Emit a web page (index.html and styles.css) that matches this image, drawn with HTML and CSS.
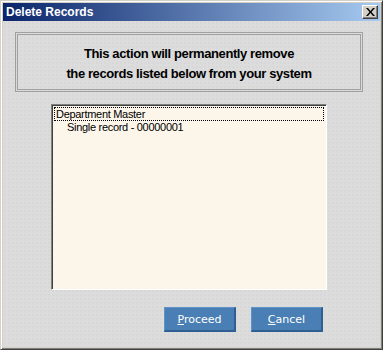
FILE: index.html
```html
<!DOCTYPE html>
<html>
	<head>
		<meta charset="utf-8" />
		<title>Delete Records</title>
		<link rel="stylesheet" href="styles.css">
	</head>
	<body>
		<div class="window">
			<div class="titlebar">
				<span class="title">Delete Records</span>
				<span class="close">
					<svg width="9" height="8" viewBox="0 0 9 8">
						<path d="M0 0h2l2.5 3 2.5-3h2l-3.5 4 3.5 4h-2l-2.5-3-2.5 3h-2l3.5-4z" fill="#000"/>
					</svg>
				</span>
			</div>
			<div class="content">
				<div class="notice">
					<p>This action will permanently remove</p>
					<p>the records listed below from your system</p>
				</div>

				<!--records list-->
				<div class="records">
					<div class="item focus">Department Master</div>
					<div class="item child">Single record - 00000001</div>
				</div>

				<div class="buttons">
					<button class="btn"><u>P</u>roceed</button>
					<button class="btn"><u>C</u>ancel</button>
				</div>
			</div>
		</div>
	</body>
</html>
```

FILE: styles.css
```css
*{
	padding: 0;
	margin: 0;
	box-sizing: border-box;
}
body{
	width: 383px;
	height: 350px;
	overflow: hidden;
	font-family: "Liberation Sans", Arial, sans-serif;
}
.window{
	width: 383px;
	height: 350px;
	background: #d4d0c8;
	border-top: 1px solid #d4d0c8;
	border-left: 1px solid #d4d0c8;
	border-right: 1px solid #404040;
	border-bottom: 1px solid #404040;
	box-shadow: inset 1px 1px 0 #fff, inset -1px -1px 0 #808080;
	padding: 2px;
	display: flex;
	flex-direction: column;
}
.titlebar{
	height: 18px;
	background: linear-gradient(to right, #0a246a, #a6caf0);
	display: flex;
	align-items: center;
	justify-content: space-between;
	padding: 0 2px 0 3px;
}
.title{
	color: #fff;
	font-weight: bold;
	font-size: 12px;
}
.close{
	width: 16px;
	height: 14px;
	background: #d4d0c8;
	border-top: 1px solid #fff;
	border-left: 1px solid #fff;
	border-right: 1px solid #404040;
	border-bottom: 1px solid #404040;
	box-shadow: inset -1px -1px 0 #808080;
	display: flex;
	align-items: center;
	justify-content: center;
	padding-bottom: 1px;
}
.content{
	flex: 1;
	background-color: #dcdcdc;
	background-image: radial-gradient(#d2d2d2 0.6px, transparent 0.8px);
	background-size: 4px 4px;
	padding: 11px 17px 0 12px;
	display: flex;
	flex-direction: column;
}
.notice{
	height: 60px;
	border: 3px double #a0a0a0;
	text-align: center;
	font-weight: bold;
	font-size: 13px;
	letter-spacing: -0.4px;
	color: #000;
	padding-top: 9px;
	line-height: 20px;
}
.records{
	margin: 12px 36px 0 36px;
	height: 186px;
	background: #fcf6ea;
	border-top: 1px solid #808080;
	border-left: 1px solid #808080;
	border-right: 1px solid #fff;
	border-bottom: 1px solid #fff;
	box-shadow: inset 1px 1px 0 #404040;
	padding: 2px;
	font-size: 11px;
	letter-spacing: -0.3px;
	color: #000;
}
.item{
	height: 14px;
	line-height: 13px;
	padding-left: 1px;
}
.focus{
	border: 1px dotted #000;
	line-height: 12px;
}
.child{
	padding-left: 13px;
}
.buttons{
	display: flex;
	gap: 15px;
	margin: 17px 0 0 149px;
}
.btn{
	width: 72px;
	height: 25px;
	background: #4a7fb5;
	border-top: 1px solid #5e93c8;
	border-left: 1px solid #5e93c8;
	border-right: 2px solid #2f5f92;
	border-bottom: 2px solid #2f5f92;
	color: #fff;
	font-family: "DejaVu Sans", sans-serif;
	font-size: 11px;
	cursor: pointer;
}
```
